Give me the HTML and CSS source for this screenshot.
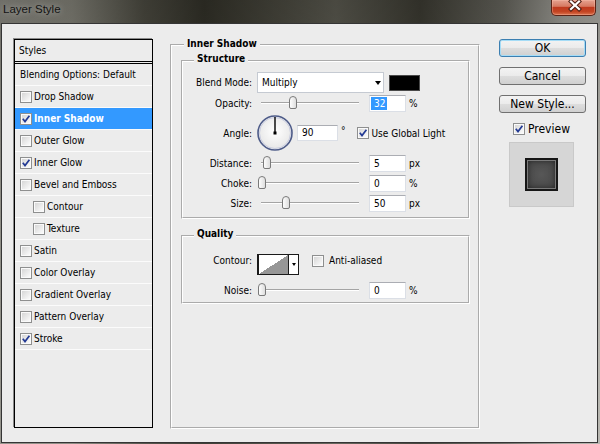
FILE: index.html
```html
<!DOCTYPE html>
<html lang="en">
<head>
    <meta charset="UTF-8">
    <title>Layer Style</title>
    <link rel="stylesheet" href="styles.css">
</head>
<body>
    <div class="window">
        <div class="titlebar">
            <span class="title">Layer Style</span>
            <span class="close">
                <svg width="45" height="15" viewBox="0 0 45 15">
                    <path d="M19 1.5 L27 9 M27 1.5 L19 9" stroke="#4a1c12" stroke-width="4.2" stroke-linecap="square"/>
                    <path d="M19 1.5 L27 9 M27 1.5 L19 9" stroke="#fff" stroke-width="2.2" stroke-linecap="square"/>
                </svg>
            </span>
        </div>
        <div class="frame">
            <div class="styles-panel">
                <div class="panel-head">Styles</div>
                <div class="style-row">Blending Options: Default</div>
                <div class="style-row"><span class="check"></span>Drop Shadow</div>
                <div class="style-row selected"><span class="check"><svg viewBox="0 0 10 10"><path d="M1.8 4.8 L4 7.6 L8.4 1.8"/></svg></span>Inner Shadow</div>
                <div class="style-row"><span class="check"></span>Outer Glow</div>
                <div class="style-row"><span class="check"><svg viewBox="0 0 10 10"><path d="M1.8 4.8 L4 7.6 L8.4 1.8"/></svg></span>Inner Glow</div>
                <div class="style-row"><span class="check"></span>Bevel and Emboss</div>
                <div class="style-row sub"><span class="check"></span>Contour</div>
                <div class="style-row sub"><span class="check"></span>Texture</div>
                <div class="style-row"><span class="check"></span>Satin</div>
                <div class="style-row"><span class="check"></span>Color Overlay</div>
                <div class="style-row"><span class="check"></span>Gradient Overlay</div>
                <div class="style-row"><span class="check"></span>Pattern Overlay</div>
                <div class="style-row"><span class="check"><svg viewBox="0 0 10 10"><path d="M1.8 4.8 L4 7.6 L8.4 1.8"/></svg></span>Stroke</div>
            </div>

            <div class="group options">
                <div class="legend outer">Inner Shadow</div>

                <div class="group structure">
                    <div class="legend">Structure</div>
                    <div class="row blend">
                        <span class="lbl">Blend Mode:</span>
                        <div class="select">Multiply<span class="arrow"></span></div>
                        <span class="swatch"></span>
                    </div>
                    <div class="row">
                        <span class="lbl">Opacity:</span>
                        <div class="slider"><span class="thumb" style="--v: 0.32"></span></div>
                        <div class="field"><span class="sel">32</span></div>
                        <span class="unit">%</span>
                    </div>
                    <div class="row angle">
                        <span class="lbl">Angle:</span>
                        <svg class="dial" width="36" height="36" viewBox="0 0 36 36">
                            <defs>
                                <radialGradient id="dialfill" cx="50%" cy="45%" r="55%">
                                    <stop offset="0" stop-color="#ffffff"/>
                                    <stop offset="1" stop-color="#e6e6e6"/>
                                </radialGradient>
                            </defs>
                            <circle cx="18" cy="18" r="17" fill="url(#dialfill)" stroke="#4d5b88" stroke-width="1.6"/>
                            <circle cx="18" cy="18" r="15.5" fill="none" stroke="#c9cde0" stroke-width="1"/>
                            <line x1="18" y1="18" x2="18" y2="2" stroke="#000" stroke-width="1.4"/>
                            <rect x="16.5" y="16.5" width="3" height="3" fill="#000"/>
                        </svg>
                        <div class="field wide">90</div>
                        <span class="deg">°</span>
                        <span class="check"><svg viewBox="0 0 10 10"><path d="M1.8 4.8 L4 7.6 L8.4 1.8"/></svg></span>
                        <span class="cb-text">Use Global Light</span>
                    </div>
                    <div class="row">
                        <span class="lbl">Distance:</span>
                        <div class="slider"><span class="thumb" style="--v: 0.05"></span></div>
                        <div class="field">5</div>
                        <span class="unit">px</span>
                    </div>
                    <div class="row">
                        <span class="lbl">Choke:</span>
                        <div class="slider"><span class="thumb" style="--v: 0"></span></div>
                        <div class="field">0</div>
                        <span class="unit">%</span>
                    </div>
                    <div class="row">
                        <span class="lbl">Size:</span>
                        <div class="slider"><span class="thumb" style="--v: 0.25"></span></div>
                        <div class="field">50</div>
                        <span class="unit">px</span>
                    </div>
                </div>

                <div class="group quality">
                    <div class="legend">Quality</div>
                    <div class="row contour-row">
                        <span class="lbl">Contour:</span>
                        <div class="contour">
                            <span class="curve"></span>
                            <span class="drop"><span class="arrow"></span></span>
                        </div>
                        <span class="check"></span>
                        <span class="cb-text">Anti-aliased</span>
                    </div>
                    <div class="row noise">
                        <span class="lbl">Noise:</span>
                        <div class="slider"><span class="thumb" style="--v: 0"></span></div>
                        <div class="field">0</div>
                        <span class="unit">%</span>
                    </div>
                </div>
            </div>

            <div class="side">
                <div class="btn default">OK</div>
                <div class="btn">Cancel</div>
                <div class="btn">New Style...</div>
                <div class="preview-check">
                    <span class="check"><svg viewBox="0 0 10 10"><path d="M1.8 4.8 L4 7.6 L8.4 1.8"/></svg></span>
                    <span>Preview</span>
                </div>
                <div class="preview">
                    <div class="swatch-preview"></div>
                </div>
            </div>
        </div>
    </div>
</body>
</html>
```

FILE: styles.css
```css
body {
    margin: 0;
    font-family: "DejaVu Sans Condensed", "Liberation Sans", sans-serif;
    font-size: 10px;
    color: #000;
}
.window {
    width: 600px;
    height: 444px;
    background:
        linear-gradient(rgba(0, 0, 0, 0.22), rgba(0, 0, 0, 0) 45%, rgba(255, 255, 255, 0.06)),
        linear-gradient(to right, #8f8e86 0%, #86857b 12%, #4e4d43 24%, #34332a 34%, #4b4a40 46%, #5e5d53 56%, #3e3d34 70%, #6a6961 84%, #a7a69f 94%, #b4b3ac 100%);
    display: flex;
    flex-direction: column;
}
.titlebar {
    height: 23px;
    display: flex;
    justify-content: space-between;
    align-items: flex-start;
}
.title {
    padding: 3px 0 0 3px;
    font-family: "Liberation Sans", sans-serif;
    font-size: 11.5px;
    line-height: 13px;
    color: #141414;
    text-shadow: 0 0 6px rgba(255, 255, 255, 0.5);
}
.close {
    width: 45px;
    height: 16px;
    margin-right: 4px;
    box-sizing: border-box;
    border: 1px solid #5a2316;
    border-top: none;
    border-radius: 0 0 5px 5px;
    background: linear-gradient(#e6a290 0%, #d67a62 42%, #bf3a1e 50%, #c34523 78%, #dc7450 100%);
    box-shadow: inset 0 0 0 1px rgba(255, 200, 180, 0.35);
}
.close svg {
    display: block;
}

.frame {
    flex: 1;
    margin: 0 2px 1px 1px;
    border: 1px solid #353535;
    background: #ececec;
    display: flex;
    align-items: flex-start;
    padding: 15px 0 0 12px;
}

/* left list */
.styles-panel {
    width: 139px;
    height: 389px;
    box-sizing: border-box;
    border: 1px solid #000;
    box-shadow: -1px -1px 0 #8a8a8a;
}
.panel-head {
    height: 21px;
    line-height: 21px;
    padding-left: 4px;
    border-bottom: 3px double #000;
}
.style-row {
    height: 21px;
    display: flex;
    align-items: center;
    padding-left: 5px;
    border-bottom: 1px solid #fbfbfb;
}
.style-row.sub {
    padding-left: 18px;
}
.style-row.selected {
    background: #3399ff;
    color: #fff;
    font-weight: bold;
}
.check {
    width: 12px;
    height: 12px;
    box-sizing: border-box;
    border: 1px solid #8e8f8f;
    background: linear-gradient(135deg, #d2d2d2, #f2f2f2 70%, #fff);
    box-shadow: inset 0 0 0 1px #fafafa;
    margin-right: 2px;
    flex-shrink: 0;
    display: flex;
    align-items: center;
    justify-content: center;
}
.check svg {
    width: 10px;
    height: 10px;
}
.check path {
    fill: none;
    stroke: #233a94;
    stroke-width: 1.7;
}

/* group boxes */
.group {
    box-sizing: border-box;
    border: 2px groove #ffffff;
}
.legend {
    width: max-content;
    margin: -9px 0 0 11px;
    padding: 0 3px;
    line-height: 12px;
    font-weight: bold;
    background: #ececec;
}
.legend.outer {
    margin: -8px 0 0 3px;
}
.options {
    width: 310px;
    height: 385px;
    margin: 5px 0 0 17px;
    padding: 0 8px 0 9px;
}
.structure {
    margin-top: 10px;
    padding-bottom: 4px;
}
.quality {
    margin-top: 16px;
    padding-bottom: 2px;
}

.row {
    display: flex;
    align-items: center;
    height: 20px;
}
.row.blend {
    height: 21px;
    margin-top: 7px;
}
.row.angle {
    height: 40px;
}
.lbl {
    width: 69px;
    text-align: right;
    margin-right: 5px;
    flex-shrink: 0;
}
.select {
    width: 127px;
    height: 21px;
    box-sizing: border-box;
    border: 1px solid #c5cad2;
    background: #fff;
    display: flex;
    align-items: center;
    justify-content: space-between;
    padding: 0 2px 0 4px;
}
.arrow {
    width: 0;
    height: 0;
    border-left: 3.5px solid transparent;
    border-right: 3.5px solid transparent;
    border-top: 4px solid #000;
}
.swatch {
    width: 31px;
    height: 16px;
    box-sizing: border-box;
    margin-left: 5px;
    background: #000;
    border: 1px solid #4a4a4a;
}

.slider {
    position: relative;
    width: 98px;
    height: 14px;
    margin-left: 4px;
}
.slider::before {
    content: "";
    position: absolute;
    left: 0;
    right: 0;
    top: 6px;
    height: 0;
    border-top: 1px solid #a4a4a4;
    border-bottom: 1px solid #fff;
}
.thumb {
    position: absolute;
    top: 0;
    left: calc(var(--v) * 96px - 3px);
    width: 8px;
    height: 13px;
    box-sizing: border-box;
    border: 1px solid #7a7a7a;
    border-radius: 4px 4px 2px 2px;
    background: linear-gradient(to right, #fdfdfd, #dedede);
}

.field {
    width: 37px;
    height: 17px;
    box-sizing: border-box;
    margin-left: 10px;
    border: 1px solid #dbdfe6;
    border-top-color: #abadb3;
    background: #fff;
    padding-left: 4px;
    line-height: 15px;
}
.field.wide {
    width: 41px;
    height: 16px;
    line-height: 14px;
    margin-left: 4px;
}
.sel {
    margin-left: -3px;
    padding: 1px 2px 1px 3px;
    background: #3399ff;
    color: #fff;
}
.unit {
    margin-left: 3px;
}
.deg {
    margin: 0 11px 6px 3px;
}
.cb-text {
    margin-left: 1px;
}

.contour-row {
    height: 21px;
    margin-top: 14px;
    align-items: flex-start;
}
.contour-row .lbl,
.contour-row .check,
.contour-row .cb-text {
    margin-top: 1px;
}
.contour-row .check {
    margin-left: 13px;
    margin-right: 4px;
}
.contour {
    width: 42px;
    height: 21px;
    box-sizing: border-box;
    border: 1px solid #1a1a1a;
    border-left-width: 2px;
    display: flex;
    background: #fff;
}
.curve {
    flex: 1;
    background: linear-gradient(to bottom right, #ffffff 50%, #969696 50%);
}
.drop {
    width: 9px;
    border-left: 1px solid #1a1a1a;
    display: flex;
    align-items: center;
    justify-content: center;
}
.drop .arrow {
    border-left-width: 2.5px;
    border-right-width: 2.5px;
    border-top-width: 3px;
}
.row.noise {
    margin-top: 5px;
}

/* buttons column */
.side {
    width: 87px;
    margin-left: 19px;
    display: flex;
    flex-direction: column;
    font-size: 12px;
}
.btn {
    height: 18px;
    box-sizing: border-box;
    border: 1px solid #707070;
    border-radius: 3px;
    background: linear-gradient(#f3f3f3 0%, #ebebeb 48%, #dddddd 52%, #d0d0d0 100%);
    text-align: center;
    line-height: 16px;
    margin-bottom: 10px;
}
.btn.default {
    border-color: #3c7fb1;
    box-shadow: inset 0 0 0 1px #a5dcf6;
}
.preview-check {
    display: flex;
    align-items: center;
    height: 17px;
    margin-top: -3px;
    padding-left: 14px;
}
.preview-check .check {
    margin-right: 3px;
}
.preview {
    width: 65px;
    height: 65px;
    box-sizing: border-box;
    margin: 5px 0 0 10px;
    background: #d6d6d6;
    border: 1px solid #c9c9c9;
    display: flex;
    align-items: center;
    justify-content: center;
}
.swatch-preview {
    width: 33px;
    height: 33px;
    box-sizing: border-box;
    border: 2px solid #161616;
    background: radial-gradient(#575757, #454545);
    box-shadow: inset 0 0 0 1px #7a7a7a, inset 0 0 6px rgba(0, 0, 0, 0.6);
}
```
